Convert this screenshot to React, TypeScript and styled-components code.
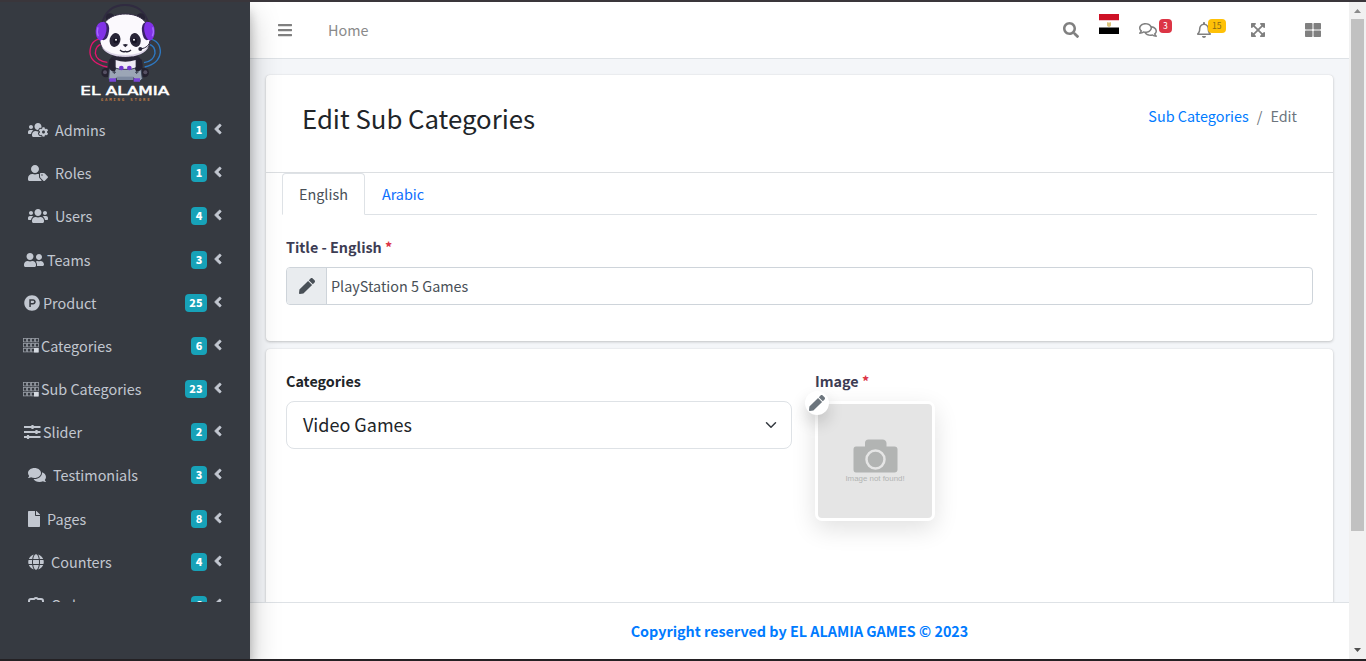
import React from 'react';
import styled, { createGlobalStyle } from 'styled-components';
import {
  FaUsersCog, FaUserTag, FaUsers, FaUserFriends, FaProductHunt, FaComments, FaFile, FaGlobe,
  FaRegComments, FaRegBell, FaExpandArrowsAlt, FaThLarge, FaAngleLeft, FaPen, FaSearch, FaBars,
} from 'react-icons/fa';

const Global = createGlobalStyle`
  * { box-sizing: border-box; }
  body { margin: 0; overflow: hidden; font-family: "Noto Sans CJK SC", "Open Sans", sans-serif; font-size: 14.4px; color: #212529; }
  svg { display: block; }
`;

const Screen = styled.div`
  width: 1366px; height: 661px; display: flex; flex-direction: column; overflow: hidden;
  border-top: 2px solid #3a363b; border-bottom: 2px solid #242124; background: #f4f6f9;
`;
const Body = styled.div`display: flex; flex: 1; min-height: 0;`;
const Sidebar = styled.aside`
  width: 250px; flex: none; background: #363a41; position: relative; z-index: 2;
  box-shadow: 0 14px 28px rgba(0,0,0,.25), 0 10px 10px rgba(0,0,0,.22);
`;
const LogoBox = styled.div`height: 106.9px; padding-left: 70px;`;
const Menu = styled.nav`height: 493.1px; overflow: hidden;`;
const MenuRow = styled.div<{ $indent: number }>`
  height: 43.2px; display: flex; align-items: center; padding: 0 27px 0 ${p => p.$indent}px; color: #c2c7d0;
`;
const MenuIcon = styled.span<{ $w: number }>`width: ${p => p.$w}px; flex: none; display: flex; margin-top: -1px;`;
const MenuText = styled.span`flex: 1; line-height: 24px; white-space: nowrap; margin-top: -1px;`;
const CountBadge = styled.span`
  height: 18px; min-width: 16px; padding: 0 4.5px; border-radius: 4px; background: #17a2b8; color: #fff;
  font-size: 10.8px; font-weight: 900; line-height: 17px; text-align: center; margin: -1px 6px 0 0;
`;
const Arrow = styled.span`width: 10px; display: flex; justify-content: center; margin-top: -3px;`;

const Main = styled.div`flex: 1; min-width: 0; display: flex; flex-direction: column;`;
const TopBar = styled.header`
  height: 57px; flex: none; display: flex; align-items: center; background: #fff; border-bottom: 1px solid #dee2e6;
  color: #808080; padding: 0 28px 0 27px;
`;
const HomeLink = styled.span`margin-left: 35px; line-height: 24px; color: #8a8a8a;`;
const Tools = styled.div`margin-left: auto; display: flex; align-items: center;`;
const Tool = styled.span<{ $gap: number }>`margin-left: ${p => p.$gap}px; position: relative; display: flex;`;
const Flag = styled.span`width: 20px; height: 20px; margin: 0 0 13px 20px;`;
const NavBadge = styled.span<{ $left: number; $top: number; $bg: string; $fg: string }>`
  position: absolute; left: ${p => p.$left}px; top: ${p => p.$top}px; height: 14px; padding: 0 4px; border-radius: 4px;
  background: ${p => p.$bg}; color: ${p => p.$fg}; font-size: 8.6px; line-height: 12.5px;
`;
const Content = styled.main`
  flex: 1; min-height: 0; overflow: hidden; padding: 16px 16px 0; display: flex; flex-direction: column; gap: 8px;
`;
const Card = styled.section<{ $h: number }>`
  height: ${p => p.$h}px; flex: none; background: #fff; border-radius: 4px;
  box-shadow: 0 0 1px rgba(0,0,0,.125), 0 1px 3px rgba(0,0,0,.2);
`;
const CardHead = styled.div`
  height: 98px; padding: 0 36px; border-bottom: 1px solid #dcdfe2; display: flex; justify-content: space-between;
`;
const Title = styled.h1`margin: 24px 0 0; font-size: 25.75px; font-weight: 400; line-height: 38px;`;
const Crumbs = styled.div`margin-top: 29px; line-height: 24px; color: #6c757d; display: flex; gap: 8px;`;
const Blue = styled.a`color: #007bff;`;
const Tabs = styled.div`margin: 0 16px; height: 42px; border-bottom: 1px solid #dee2e6; display: flex;`;
const Tab = styled.div<{ $active?: boolean }>`
  height: 42px; padding: 0 16px; border: 1px solid ${p => (p.$active ? '#dee2e6' : 'transparent')};
  border-bottom-color: ${p => (p.$active ? '#fff' : 'transparent')}; border-radius: 4px 4px 0 0;
  color: ${p => (p.$active ? '#495057' : '#0d6efd')}; line-height: 39px;
`;
const Label = styled.div<{ $c?: string }>`font-weight: 700; font-size: 14.35px; line-height: 24px; color: ${p => p.$c || '#212529'};`;
const Star = styled.span`color: #dc3545;`;
const Form = styled.div`padding: 20px 20px 0;`;
const InputGroup = styled.div`
  margin-top: 8px; height: 38px; border: 1px solid #ced4da; border-radius: 4px; display: flex; overflow: hidden;
`;
const Addon = styled.div`
  width: 40px; background: #e9ecef; border-right: 1px solid #ced4da; color: #495057; display: flex; align-items: center; justify-content: center;
`;
const InputText = styled.div`padding-left: 4px; line-height: 36px; color: #495057;`;
const Columns = styled.div`display: flex; gap: 23px; padding: 20px 20px 0;`;
const Select = styled.div`
  width: 506px; height: 48px; margin-top: 8px; padding: 0 14px 0 16px; border: 1px solid #dee2e6; border-radius: 8px;
  display: flex; align-items: center; justify-content: space-between; font-size: 18px;
`;
const SelectText = styled.span`line-height: 24px; margin-top: -2px;`;
const Preview = styled.div`
  position: relative; width: 120px; height: 120px; margin-top: 8px; border: 3px solid #fff; border-radius: 7px; background: #e5e5e5;
  box-shadow: 0 8px 24px rgba(0,0,0,.12); display: flex; flex-direction: column; align-items: center; padding-top: 35px; color: #b2b4b3;
`;
const NotFound = styled.span`font-family: "Liberation Sans", sans-serif; font-size: 7.9px; line-height: 9px; margin-top: 1px; white-space: nowrap;`;
const EditDot = styled.span`
  position: absolute; left: -13px; top: -13px; width: 24px; height: 24px; border-radius: 50%; background: #fff; color: #6c757d;
  display: flex; align-items: center; justify-content: center; box-shadow: 0 8px 16px rgba(0,0,0,.16);
`;
const Footer = styled.footer`
  height: 57px; flex: none; background: #fff; border-top: 1px solid #dee2e6; color: #007bff; font-weight: 700;
  font-size: 14.35px; display: flex; align-items: center; justify-content: center; padding-bottom: 2px;
`;
const ScrollTrack = styled.div`
  width: 17px; flex: none; background: #f1f1f1; display: flex; flex-direction: column; align-items: center; justify-content: space-between;
`;
const ScrollThumb = styled.div`width: 13px; height: 512px; background: #c1c1c1; margin-bottom: auto;`;
const ScrollArrow = styled.span`width: 17px; height: 17px;`;

const Logo = () => (
  <svg width="110" height="102" viewBox="0 6 330 306">
    <g fill="none" strokeWidth="4">
      <path d="M94 116Q60 120 60 158Q62 190 112 201M96 132Q76 136 76 160Q80 184 112 187" stroke="#e5156d" />
      <path d="M236 116Q272 122 271 158Q266 192 224 201M236 132Q256 138 255 160Q250 184 222 188" stroke="#2e79c4" />
      <path d="M96 72Q110 15 165 15Q220 15 236 72" stroke="#302b40" strokeWidth="6" />
    </g>
    <path d="M116 190Q120 164 144 166H188Q212 164 216 190L220 214H112Z" fill="#282536" />
    <path d="M137 180Q165 190 197 180V208H137Z" fill="#eeeaf5" />
    <circle cx="120" cy="53" r="13" fill="#262334" /><circle cx="212" cy="53" r="13" fill="#262334" />
    <path d="M166 42C216 42 240 72 241 108C247 148 212 171 166 171C118 171 84 148 90 108C92 72 116 42 166 42Z" fill="#fbf9fd" stroke="#332c44" strokeWidth="3" />
    <path d="M95 140Q118 165 166 165T236 140Q222 170 166 170T95 140" fill="#d9d2e5" />
    <ellipse cx="135" cy="120" rx="16" ry="21" transform="rotate(15 135 120)" fill="#292638" />
    <ellipse cx="196" cy="120" rx="16" ry="21" transform="rotate(-15 196 120)" fill="#292638" />
    <circle cx="138" cy="122" r="8" fill="#151324" /><circle cx="193" cy="122" r="8" fill="#151324" />
    <circle cx="138" cy="119" r="3" fill="#fff" /><circle cx="192" cy="119" r="3" fill="#fff" />
    <path d="M158 134Q166 130 174 134L166 142Z" fill="#292638" />
    <path d="M150 150Q158 158 166 154Q174 158 183 150" fill="none" stroke="#292638" strokeWidth="4" />
    <path d="M105 66Q120 70 117 94T101 121L87 116Q91 91 105 66ZM228 66Q213 70 216 94T230 121L246 116Q242 91 228 66Z" fill="#392268" />
    <path d="M102 65Q79 65 77 92Q76 116 91 122Q104 118 109 94Q112 72 102 65ZM230 65Q253 65 254 92Q255 116 240 122Q228 118 223 94Q220 72 230 65Z" fill="#8131e8" />
    <path d="M84 82Q79 96 85 109M248 82Q253 96 247 109" fill="none" stroke="#a56aff" strokeWidth="4" />
    <path d="M240 122Q238 143 211 147" fill="none" stroke="#292638" strokeWidth="3" /><circle cx="211" cy="147" r="6" fill="#292638" />
    <circle cx="108" cy="218" r="14" fill="#25222f" /><circle cx="223" cy="218" r="14" fill="#25222f" />
    <circle cx="105" cy="217" r="6" fill="#555063" /><circle cx="226" cy="217" r="6" fill="#555063" />
    <path d="M118 207Q135 200 150 208H182Q199 200 213 207L217 236Q209 249 197 239L190 233H142L134 239Q122 247 116 236Z" fill="#9ca6b6" stroke="#3b4456" strokeWidth="3" />
    <path d="M141 230H190V240H141Z" fill="#7e8aa0" />
    <path d="M118 235H138V245H118ZM191 235H210V245H191Z" fill="#7a45d8" />
    <path d="M133 212V222M128 217H138M200 212V222M195 217H205" stroke="#454b5c" strokeWidth="3" />
    <path d="M124 184Q121 202 130 207M209 184Q212 202 203 207" fill="none" stroke="#252231" strokeWidth="15" strokeLinecap="round" />
    <circle cx="154" cy="204" r="7" fill="#7035cf" /><circle cx="178" cy="204" r="7" fill="#7035cf" />
    <text x="31" y="284" textLength="267" lengthAdjust="spacingAndGlyphs" fill="#fff" stroke="#fff" strokeWidth="1.5" fontFamily="DejaVu Sans" fontWeight="400" fontSize="35">EL ALAMIA</text>
    <text x="92" y="302" textLength="147" lengthAdjust="spacing" fill="#c07a42" fontFamily="DejaVu Sans Mono" fontWeight="700" fontSize="12">GAMING STORE</text>
  </svg>
);

const GridIcon = () => (
  <svg width="16" height="15" viewBox="0 0 16 15">
    <g fill="none" stroke="#9a9fa7" strokeWidth=".8">
      {[0, 1, 2].map(r => [0, 1, 2, 3].map(c => (
        <rect key={`${r}${c}`} x={0.5 + c * 4} y={0.5 + r * 5} width="3" height="3.4" />
      )))}
    </g>
    <path d="M11 10h4.5v4.5H11z" fill="#d5d9e0" />
  </svg>
);
const TuneIcon = () => (
  <svg width="18" height="14" viewBox="0 0 18 14" stroke="currentColor">
    <path d="M1 2h16.5M1 7h16.5M1 12h16.5" strokeWidth="1.8" />
    <path d="M9.5 0v4M13.5 5v4M5 10v4" strokeWidth="2.2" />
  </svg>
);
const OrderIcon = () => (
  <svg width="16" height="18" viewBox="0 0 16 18" fill="none" stroke="currentColor" strokeWidth="2">
    <path d="M5 3H3Q1 3 1 5v10q0 2 2 2h10q2 0 2-2V5q0-2-2-2h-2M4.500 3H6q2-2 4 0h1.500" />
  </svg>
);
const CameraIcon = () => (
  <svg width="45" height="34" viewBox="0 0 45 34">
    <path d="M3 7.500H12V4Q12 .5 15.500.5H29.500Q33 .5 33.500 4V7.500H41.500Q44.500 7.500 44.500 10.500V30.500Q44.500 33.500 41.500 33.500H3Q.5 33.500.5 30.500V10.500Q.5 7.500 3 7.500Z" fill="currentColor" />
    <circle cx="22.5" cy="20.5" r="9" fill="currentColor" stroke="#e5e5e5" strokeWidth="2.5" />
  </svg>
);

type Item = { icon: React.ReactNode; text: string; count: string; indent: number; w: number };
const items: Item[] = [
  { icon: <FaUsersCog size={20} />, text: 'Admins', count: '1', indent: 28, w: 27 },
  { icon: <FaUserTag size={20} />, text: 'Roles', count: '1', indent: 28, w: 27 },
  { icon: <FaUsers size={20} />, text: 'Users', count: '4', indent: 28, w: 27 },
  { icon: <FaUserFriends size={20} />, text: 'Teams', count: '3', indent: 24, w: 23 },
  { icon: <FaProductHunt size={16} />, text: 'Product', count: '25', indent: 24, w: 19 },
  { icon: <GridIcon />, text: 'Categories', count: '6', indent: 23, w: 18 },
  { icon: <GridIcon />, text: 'Sub Categories', count: '23', indent: 23, w: 18 },
  { icon: <TuneIcon />, text: 'Slider', count: '2', indent: 23, w: 20 },
  { icon: <FaComments size={18} />, text: 'Testimonials', count: '3', indent: 28, w: 25 },
  { icon: <FaFile size={16} />, text: 'Pages', count: '8', indent: 26, w: 21 },
  { icon: <FaGlobe size={16} />, text: 'Counters', count: '4', indent: 28, w: 23 },
  { icon: <OrderIcon />, text: 'Orders', count: '6', indent: 28, w: 23 },
];

export default function App() {
  return (
    <Screen>
      <Global />
      <Body>
        <Sidebar>
          <LogoBox><Logo /></LogoBox>
          <Menu>
            {items.map(i => (
              <MenuRow key={i.text} $indent={i.indent}>
                <MenuIcon $w={i.w}>{i.icon}</MenuIcon>
                <MenuText>{i.text}</MenuText>
                <CountBadge>{i.count}</CountBadge>
                <Arrow><FaAngleLeft size={16} strokeWidth={20} stroke="currentColor" /></Arrow>
              </MenuRow>
            ))}
          </Menu>
        </Sidebar>
        <Main>
          <TopBar>
            <FaBars size={16} />
            <HomeLink>Home</HomeLink>
            <Tools>
              <Tool $gap={0}><FaSearch size={16} /></Tool>
              <Flag>
                <svg width="20" height="20" viewBox="0 0 20 20">
                  <path d="M0 0h20v6.5H0z" fill="#ce1126" /><path d="M0 6.5h20v7H0z" fill="#fff" /><path d="M0 13.5h20V20H0z" />
                  <path d="M8 8l1.4.8L10 8l.6.8L12 8v3.5l-1 1.3H9l-1-1.3z" fill="#dcc47c" />
                </svg>
              </Flag>
              <Tool $gap={20}><FaRegComments size={18} /><NavBadge $left={20} $top={-2} $bg="#dc3545" $fg="#fff">3</NavBadge></Tool>
              <Tool $gap={39}><FaRegBell size={16} /><NavBadge $left={12} $top={-3} $bg="#ffc107" $fg="#8a6a14">15</NavBadge></Tool>
              <Tool $gap={38}><FaExpandArrowsAlt size={16} /></Tool>
              <Tool $gap={39}><FaThLarge size={16} /></Tool>
            </Tools>
          </TopBar>
          <Content>
            <Card $h={266}>
              <CardHead>
                <Title>Edit Sub Categories</Title>
                <Crumbs><Blue>Sub Categories</Blue><span>/</span><span>Edit</span></Crumbs>
              </CardHead>
              <Tabs><Tab $active>English</Tab><Tab>Arabic</Tab></Tabs>
              <Form>
                <Label $c="#3d3d54">Title - English <Star>*</Star></Label>
                <InputGroup>
                  <Addon><FaPen size={16} /></Addon>
                  <InputText>PlayStation 5 Games</InputText>
                </InputGroup>
              </Form>
            </Card>
            <Card $h={310}>
              <Columns>
                <div>
                  <Label>Categories</Label>
                  <Select>
                    <SelectText>Video Games</SelectText>
                    <svg width="12" height="12" viewBox="0 0 16 16" fill="none" stroke="#343a40" strokeWidth="2" strokeLinecap="round" strokeLinejoin="round"><path d="m2 5 6 6 6-6" /></svg>
                  </Select>
                </div>
                <div>
                  <Label $c="#3d3d54">Image <Star>*</Star></Label>
                  <Preview>
                    <CameraIcon />
                    <NotFound>Image not found!</NotFound>
                    <EditDot><FaPen size={16} /></EditDot>
                  </Preview>
                </div>
              </Columns>
            </Card>
          </Content>
          <Footer>Copyright reserved by EL ALAMIA GAMES © 2023</Footer>
        </Main>
        <ScrollTrack>
          <ScrollArrow><svg width="17" height="17"><path d="M5 11h7L8.500 7z" fill="#8b8b8b" /></svg></ScrollArrow>
          <ScrollThumb />
          <ScrollArrow><svg width="17" height="17"><path d="M5 6h7l-3.500 4z" fill="#505050" /></svg></ScrollArrow>
        </ScrollTrack>
      </Body>
    </Screen>
  );
}
